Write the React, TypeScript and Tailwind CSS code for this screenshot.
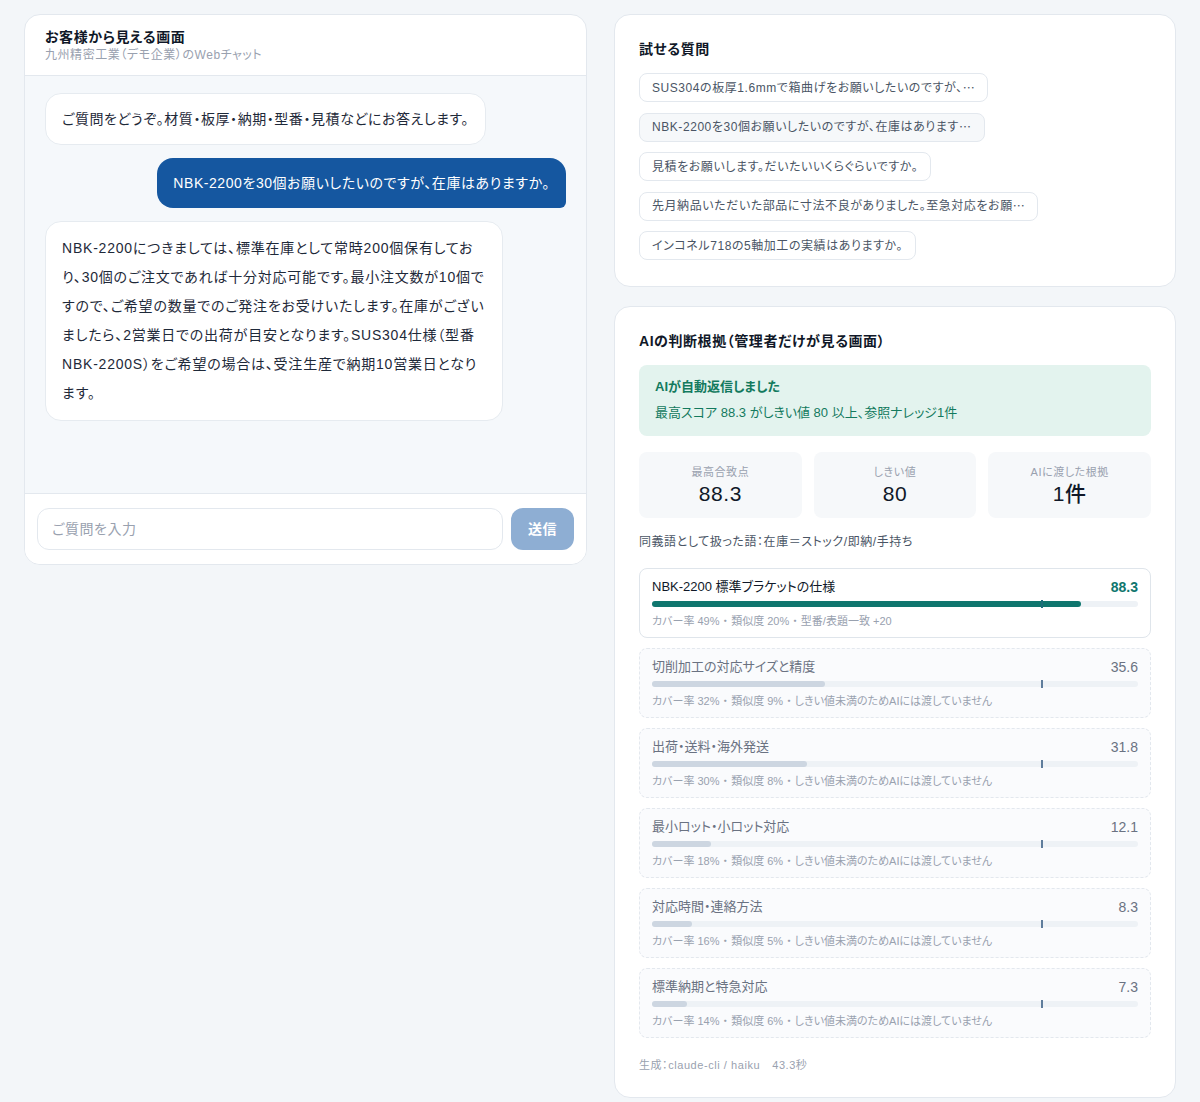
import { useState } from "react";

type Hit = {
  title: string;
  score: number;
  cover: number;
  sim: number;
  note: string;
  used: boolean;
};

const THRESHOLD = 80;

const hits: Hit[] = [
  { title: "NBK-2200 標準ブラケットの仕様", score: 88.3, cover: 49, sim: 20, note: "型番/表題一致 +20", used: true },
  { title: "切削加工の対応サイズと精度", score: 35.6, cover: 32, sim: 9, note: "しきい値未満のためAIには渡していません", used: false },
  { title: "出荷・送料・海外発送", score: 31.8, cover: 30, sim: 8, note: "しきい値未満のためAIには渡していません", used: false },
  { title: "最小ロット・小ロット対応", score: 12.1, cover: 18, sim: 6, note: "しきい値未満のためAIには渡していません", used: false },
  { title: "対応時間・連絡方法", score: 8.3, cover: 16, sim: 5, note: "しきい値未満のためAIには渡していません", used: false },
  { title: "標準納期と特急対応", score: 7.3, cover: 14, sim: 6, note: "しきい値未満のためAIには渡していません", used: false },
];

// 長い質問は途中で切って表示
const samples = [
  { text: "SUS304の板厚1.6mmで箱曲げをお願いしたいのですが、", cut: true },
  { text: "NBK-2200を30個お願いしたいのですが、在庫はあります", cut: true },
  { text: "見積をお願いします。だいたいいくらぐらいですか。", cut: false },
  { text: "先月納品いただいた部品に寸法不良がありました。至急対応をお願", cut: true },
  { text: "インコネル718の5軸加工の実績はありますか。", cut: false },
];

function ChatPanel() {
  const [text, setText] = useState("");

  return (
    <div className="overflow-hidden rounded-2xl border border-[#e3e8ee] bg-white">
      <div className="border-b border-[#e3e8ee] px-5 py-3">
        <h2 className="text-sm font-bold leading-5 text-gray-900">お客様から見える画面</h2>
        <p className="text-xs leading-4 text-gray-400">九州精密工業（デモ企業）のWebチャット</p>
      </div>

      <div className="flex h-[417px] flex-col gap-[13px] bg-[#f5f8fb] px-5 pt-[17px]">
        <div className="max-w-[88%] self-start rounded-2xl border border-[#e6ebf0] bg-white px-4 py-3 text-sm leading-[26px] text-gray-800">
          ご質問をどうぞ。材質・板厚・納期・型番・見積などにお答えします。
        </div>
        <div className="max-w-[88%] self-end rounded-2xl rounded-br-md bg-[#1557a0] px-4 py-[11px] text-sm leading-[28px] text-white">
          NBK-2200を30個お願いしたいのですが、在庫はありますか。
        </div>
        <div className="max-w-[88%] self-start rounded-2xl border border-[#e6ebf0] bg-white px-4 py-3 text-sm leading-[29px] tracking-[0.056em] text-gray-800">
          NBK-2200につきましては、標準在庫として常時200個保有しており、30個のご注文であれば十分対応可能です。最小注文数が10個ですので、ご希望の数量でのご発注をお受けいたします。在庫がございましたら、2営業日での出荷が目安となります。SUS304仕様（型番NBK-2200S）をご希望の場合は、受注生産で納期10営業日となります。
        </div>
      </div>

      <div className="flex gap-2 border-t border-[#e3e8ee] bg-white px-3 py-3.5">
        <input
          value={text}
          onChange={e => setText(e.target.value)}
          placeholder="ご質問を入力"
          className="h-[42px] min-w-0 flex-1 rounded-xl border border-[#e3e8ee] px-3.5 text-sm text-gray-800 outline-none placeholder:text-gray-400"
        />
        <button
          disabled={!text}
          className="h-[42px] w-[63px] rounded-xl bg-[#1557a0] text-sm font-bold text-white disabled:bg-[#8eaed3]"
        >
          送信
        </button>
      </div>
    </div>
  );
}

function SamplePanel() {
  return (
    <div className="rounded-2xl border border-[#e3e8ee] bg-white px-6 pt-6 pb-[26px]">
      <h2 className="mb-3.5 text-sm font-bold leading-5 text-gray-900">試せる質問</h2>
      <div className="flex flex-col items-start gap-[10.5px]">
        {samples.map((s, i) => (
          <button
            key={s.text}
            className={`flex h-[29px] items-center rounded-lg border border-[#e3e8ee] px-3 text-xs text-gray-600 ${
              i === 1 ? "bg-[#f6f8fa]" : "bg-white"
            }`}
          >
            {s.text}
            {s.cut && <span className="font-['Noto_Sans_CJK_JP',sans-serif]">…</span>}
          </button>
        ))}
      </div>
    </div>
  );
}

function HitRow({ hit }: { hit: Hit }) {
  return (
    <div
      className={`rounded-lg px-3 pt-2 pb-2 tracking-normal ${
        hit.used
          ? "border border-[#dfe5eb] bg-white"
          : "border border-dashed border-[#e3e8ee] bg-[#fafbfd]"
      }`}
    >
      <div className="flex items-center justify-between">
        <span className={`text-[13px] leading-5 ${hit.used ? "text-gray-900" : "text-gray-500"}`}>{hit.title}</span>
        <span className={`text-sm leading-5 ${hit.used ? "font-semibold text-[#0f766e]" : "text-gray-500"}`}>
          {hit.score.toFixed(1)}
        </span>
      </div>
      <div className="relative mt-1 h-1.5 rounded-full bg-[#eef2f6]">
        <div
          className={`h-full rounded-full ${hit.used ? "bg-[#0f766e]" : "bg-[#cdd6e1]"}`}
          style={{ width: `${hit.score}%` }}
        />
        <div
          className={`absolute -top-px h-2 w-0.5 ${hit.used ? "bg-[#1d6d7a]" : "bg-[#5f7d9c]"}`}
          style={{ left: `${THRESHOLD}%` }}
        />
      </div>
      <p className="mt-1.5 text-[11px] leading-4 text-gray-400">
        カバー率 {hit.cover}% ・ 類似度 {hit.sim}% ・ {hit.note}
      </p>
    </div>
  );
}

function ReasonPanel() {
  const stats = [
    { label: "最高合致点", value: "88.3" },
    { label: "しきい値", value: "80" },
    { label: "AIに渡した根拠", value: "1件" },
  ];

  return (
    <div className="rounded-2xl border border-[#e3e8ee] bg-white px-6 pt-6 pb-6">
      <h2 className="mb-3.5 text-sm font-bold leading-5 text-gray-900">AIの判断根拠（管理者だけが見る画面）</h2>

      <div className="rounded-lg bg-[#e3f3ee] px-4 pt-3 pb-[13px] text-[13px] tracking-normal text-[#137a5e]">
        <p className="font-bold leading-5">AIが自動返信しました</p>
        <p className="mt-1.5 leading-5">最高スコア 88.3 がしきい値 80 以上、参照ナレッジ1件</p>
      </div>

      <div className="mt-4 grid grid-cols-3 gap-3">
        {stats.map(s => (
          <div key={s.label} className="rounded-lg bg-[#f6f8fa] pt-3 pb-2.5 text-center">
            <p className="text-[11px] leading-4 text-gray-400">{s.label}</p>
            <p className="text-[21px] leading-7 font-medium text-gray-900">{s.value}</p>
          </div>
        ))}
      </div>

      <p className="mt-4 mb-[18px] text-xs leading-4 text-gray-600">同義語として扱った語：在庫＝ストック/即納/手持ち</p>

      <div className="flex flex-col gap-2.5">
        {hits.map(h => (
          <HitRow key={h.title} hit={h} />
        ))}
      </div>

      <p className="mt-[19px] text-[11px] leading-4 text-gray-400">
        生成：claude-cli / haiku<span className="ml-3">43.3秒</span>
      </p>
    </div>
  );
}

export default function App() {
  return (
    <div className="min-h-screen bg-[#f3f6f9] px-6 pt-3.5 font-['Liberation_Sans','Noto_Sans_CJK_JP',sans-serif] tracking-[0.035em] [font-feature-settings:'palt']">
      <div className="grid grid-cols-[563px_1fr] items-start gap-[27px]">
        <ChatPanel />
        <div className="flex flex-col gap-[19px]">
          <SamplePanel />
          <ReasonPanel />
        </div>
      </div>
    </div>
  );
}
